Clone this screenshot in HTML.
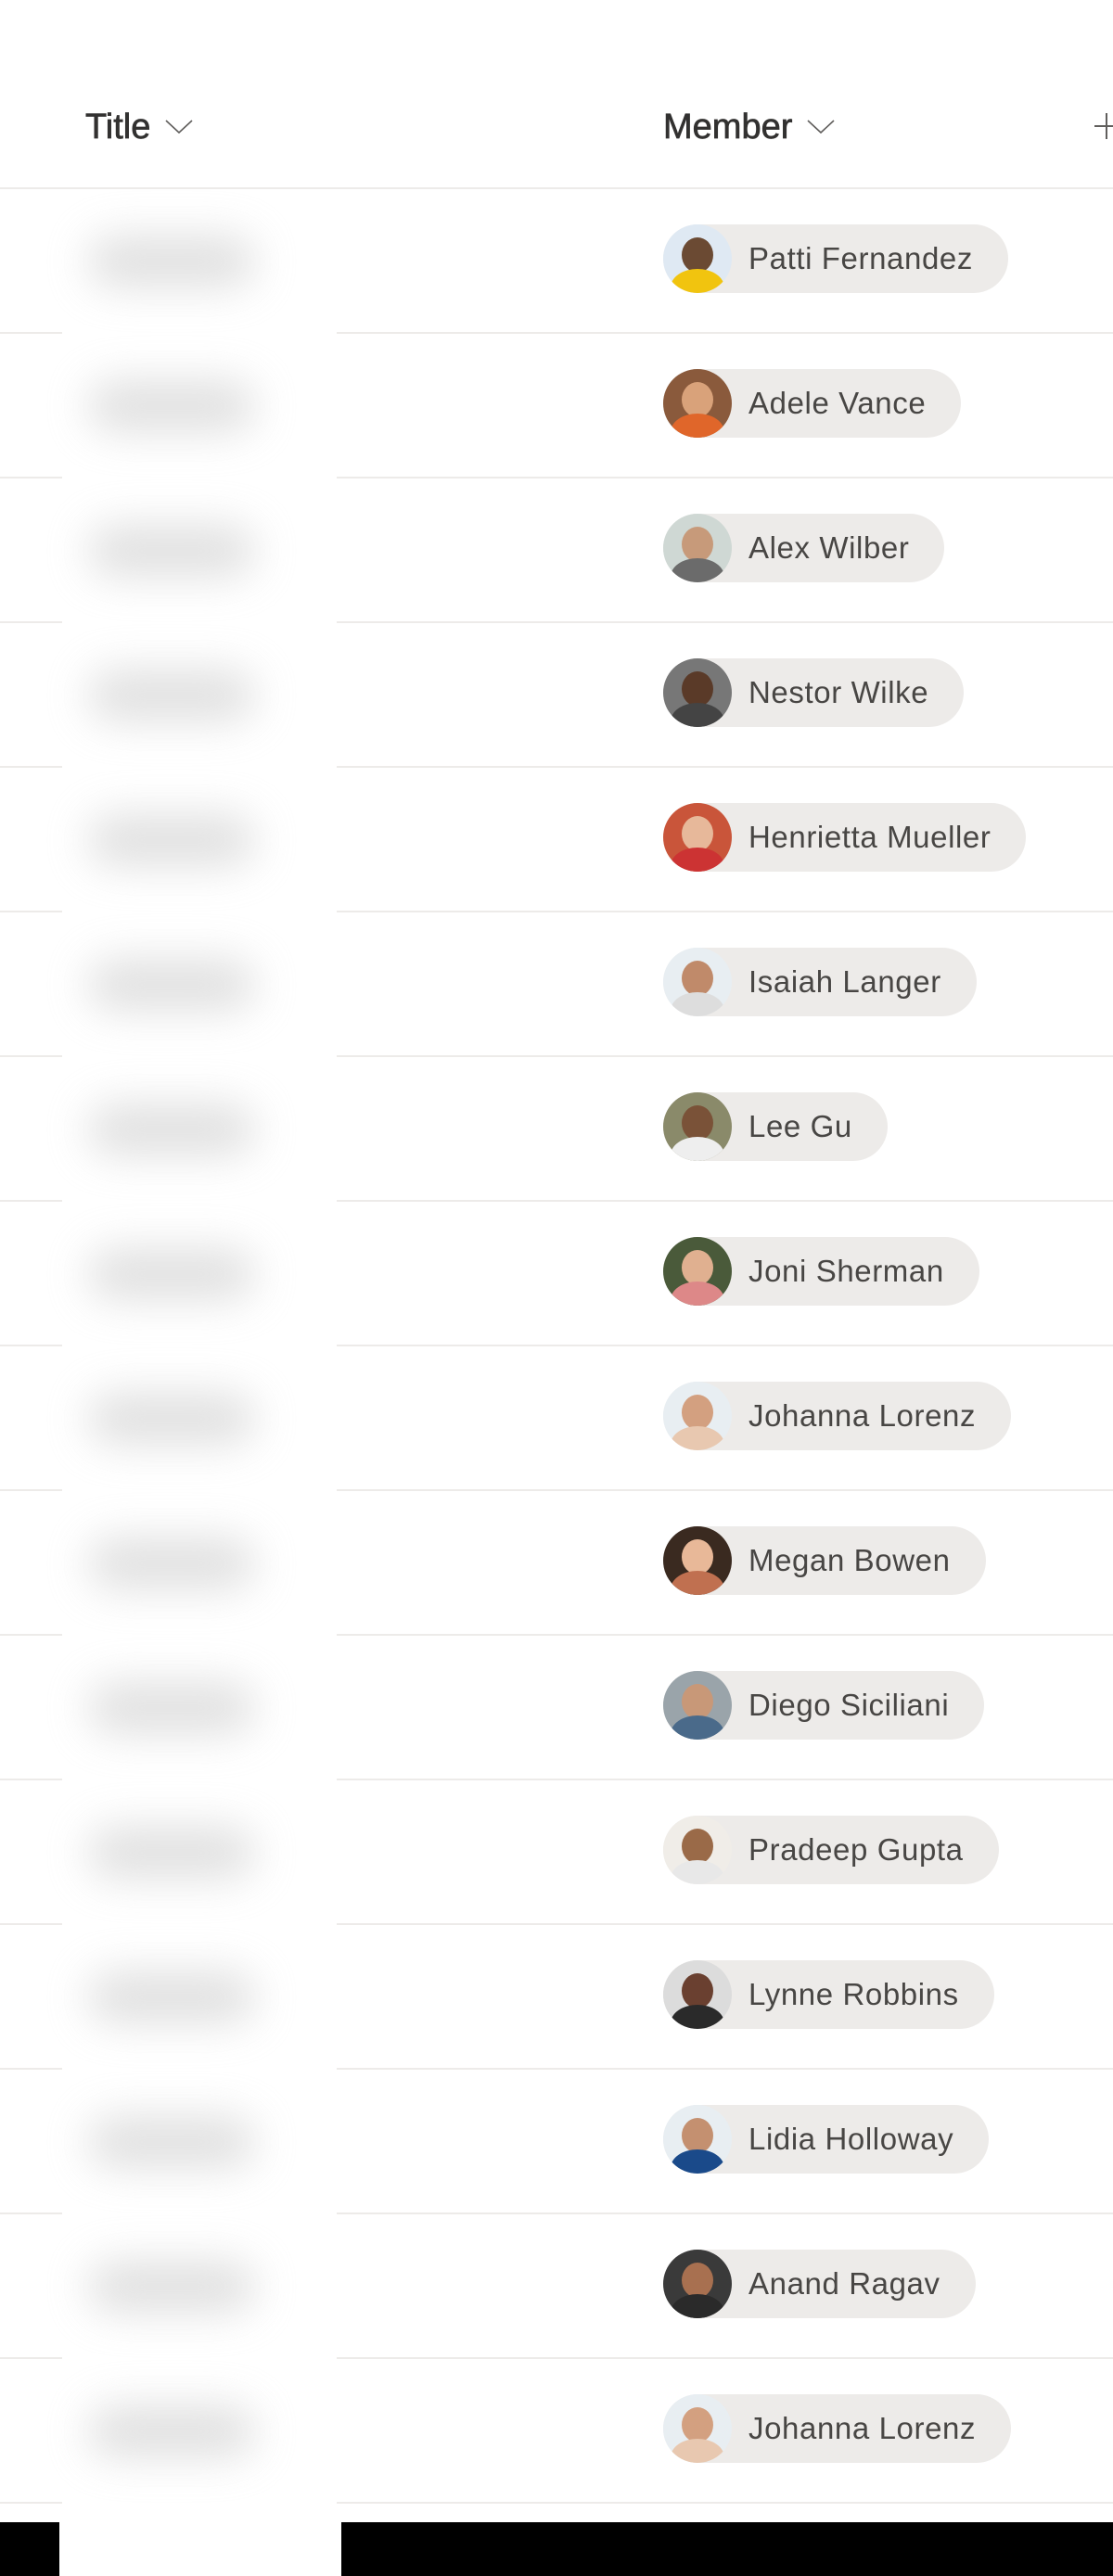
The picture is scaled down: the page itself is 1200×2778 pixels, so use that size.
<!DOCTYPE html>
<html><head><meta charset="utf-8"><style>
html,body{margin:0;padding:0;background:#fff;width:1200px;height:2778px;overflow:hidden;position:relative;font-family:"Liberation Sans",sans-serif;}
.hdr{position:absolute;top:116px;font-size:38px;color:#323130;font-weight:normal;-webkit-text-stroke:0.7px #323130}
.hdr svg{vertical-align:middle;margin-left:14px;position:relative;top:-3px}
.line{position:absolute;left:0;width:1200px;height:2px;background:#edebe9}
.col{position:absolute;left:67px;width:296px;top:206px;height:2572px;background:#fff}
.blob{position:absolute;left:95px;width:180px;height:56px;background:#d4d4d4;border-radius:28px;filter:blur(22px);opacity:.7}
.pill{position:absolute;left:715px;height:74px;border-radius:37px;background:#edebe9;font-size:33px;color:#484644;line-height:74px;padding-left:92px;padding-right:38px;letter-spacing:0.6px;white-space:nowrap}
.av{position:absolute;left:0;top:0;width:74px;height:74px;border-radius:50%;overflow:hidden}
.av i{position:absolute;left:20px;top:14px;width:34px;height:38px;border-radius:50%}
.av b{position:absolute;left:8px;top:48px;width:58px;height:40px;border-radius:50%}
.bar{position:absolute;top:2720px;left:0;width:1200px;height:58px;background:#000}
.wb{position:absolute;top:2720px;left:64px;width:304px;height:58px;background:#fff}
</style></head><body>
<div class="hdr" style="left:92px">Title<svg width="34" height="20" viewBox="0 0 34 20"><path d="M3 4 L17 17 L31 4" fill="none" stroke="#605e5c" stroke-width="1.6"/></svg></div>
<div class="hdr" style="left:715px">Member<svg width="34" height="20" viewBox="0 0 34 20"><path d="M3 4 L17 17 L31 4" fill="none" stroke="#605e5c" stroke-width="1.6"/></svg></div>
<div style="position:absolute;left:1180px;top:135px;width:30px;height:2px;background:#605e5c"></div>
<div style="position:absolute;left:1192px;top:122px;width:2px;height:28px;background:#605e5c"></div>
<div id="rows"></div>
<div class="bar"></div><div class="wb"></div>
<script>
var names=[["Patti Fernandez","#dfe9f3","#6b4a33","#f1c40f"],["Adele Vance","#8a5a3c","#d9a27a","#e0662a"],["Alex Wilber","#cfd8d4","#c79a7a","#6b6b6b"],["Nestor Wilke","#777","#5a3a28","#444"],["Henrietta Mueller","#c9553a","#e7b89a","#c33"],["Isaiah Langer","#e8eef2","#c08a6a","#ddd"],["Lee Gu","#8a8a6a","#7a5238","#eee"],["Joni Sherman","#4a5a3a","#e0b090","#d88"],["Johanna Lorenz","#e8eef2","#d3a080","#e8c8b0"],["Megan Bowen","#3a2a20","#e8b898","#c07050"],["Diego Siciliani","#9aa4aa","#c89878","#4a6a8a"],["Pradeep Gupta","#f0ede8","#9a6a48","#e8e8e8"],["Lynne Robbins","#dcdcdc","#6a4030","#2a2a2a"],["Lidia Holloway","#e8eef2","#c49070","#1a4a8a"],["Anand Ragav","#3a3a3a","#a87050","#2a2a2a"],["Johanna Lorenz","#e8eef2","#d3a080","#e8c8b0"]];
var h="";
for(var i=0;i<16;i++){var t=204+156*i;
h+='<div class="line" style="top:'+(t+154)+'px"></div>';
}
h+='<div class="line" style="top:202px"></div><div class="col"></div>';
for(var i=0;i<16;i++){var t=204+156*i;var n=names[i];
h+='<div class="blob" style="top:'+(t+50)+'px"></div>';
h+='<div class="pill" style="top:'+(t+38)+'px"><div class="av" style="background:'+n[1]+'"><i style="background:'+n[2]+'"></i><b style="background:'+n[3]+'"></b></div>'+n[0]+'</div>';}
document.getElementById("rows").innerHTML=h;
</script>
</body></html>
